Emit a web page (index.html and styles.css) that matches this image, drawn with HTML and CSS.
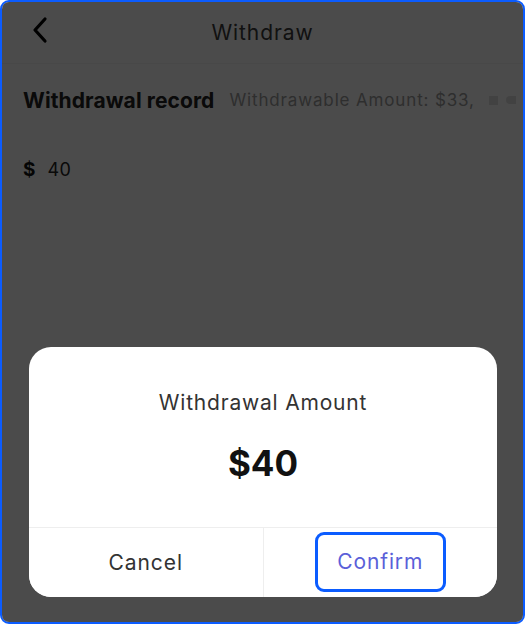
FILE: index.html
```html
<!DOCTYPE html>
<html>
<head>
<meta charset="utf-8">
<link rel="stylesheet" href="styles.css">
</head>
<body>
<div class="frame">
  <header class="nav">
    <svg class="back" width="18" height="28" viewBox="0 0 18 28"><path d="M14 3 L4 14 L14 25" fill="none" stroke="#000" stroke-width="3.2" stroke-linecap="round" stroke-linejoin="round"/></svg>
    <h1 class="nav-title">Withdraw</h1>
  </header>
  <div class="record-row">
    <span class="record-title">Withdrawal record</span>
    <div class="marquee">
      <span class="avail">Withdrawable Amount: $33,</span>
      <span class="fade-icon"></span>
      <span class="fade-icon2"></span>
    </div>
  </div>
  <div class="amount-row">
    <span class="cur">$</span>
    <span class="amt">40</span>
  </div>

  <div class="overlay"></div>
  <div class="dialog">
    <div class="dialog-body">
      <p class="dialog-title">Withdrawal Amount</p>
      <p class="dialog-value">$40</p>
    </div>
    <div class="dialog-actions">
      <button class="btn btn-cancel">Cancel</button>
      <button class="btn btn-confirm"><span class="focus">Confirm</span></button>
    </div>
  </div>
</div>
</body>
</html>
```
FILE: styles.css
```css
* { box-sizing: border-box; }
html, body { margin: 0; padding: 0; background: #fff; }
body {
  width: 525px;
  height: 624px;
  font-family: "Inter", "Open Sans", sans-serif;
}
.frame {
  position: relative;
  width: 525px;
  height: 624px;
  border: 2px solid #0b5cff;
  border-radius: 9px;
  background: #fff;
  overflow: hidden;
}
.nav {
  height: 62px;
  border-bottom: 1px solid #f3f3f3;
  display: flex;
  align-items: center;
  justify-content: center;
  position: relative;
}
.back {
  position: absolute;
  left: 29px;
  top: 14px;
}
.nav-title {
  margin: 0;
  font-size: 21px;
  font-weight: 400;
  color: #3a3a3a;
  letter-spacing: 0.9px;
}
.record-row {
  display: flex;
  align-items: center;
  padding: 11px 0 0 21px;
  height: 61px;
  white-space: nowrap;
}
.record-title {
  font-size: 21px;
  font-weight: 700;
  color: #222;
  letter-spacing: 0.1px;
}
.marquee {
  margin-left: 15px;
  display: flex;
  align-items: center;
  overflow: hidden;
  flex: 1;
}
.avail {
  font-size: 17px;
  color: #9c9c9c;
  letter-spacing: 0.85px;
}
.fade-icon {
  width: 9px; height: 9px;
  margin-left: 14px;
  background: #bbb;
  opacity: 0.45;
}
.fade-icon2 {
  width: 10px; height: 8px;
  margin-left: 8px;
  border-radius: 5px 0 0 5px;
  background: #bbb;
  opacity: 0.45;
}
.amount-row {
  display: flex;
  align-items: center;
  padding: 33px 0 0 21px;
  gap: 12px;
}
.cur { font-size: 19px; font-weight: 700; color: #111; }
.amt { font-size: 18px; color: #222; letter-spacing: 0.5px; }

.overlay {
  position: absolute;
  inset: 0;
  background: rgba(0,0,0,0.705);
}
.dialog {
  position: absolute;
  left: 27px;
  top: 345px;
  width: 468px;
  height: 250px;
  background: #fff;
  border-radius: 22px;
  overflow: hidden;
  display: flex;
  flex-direction: column;
}
.dialog-body {
  flex: 1;
  display: flex;
  flex-direction: column;
  align-items: center;
  padding-top: 43px;
  border-bottom: 1px solid #eeeeee;
}
.dialog-title {
  margin: 0;
  font-size: 21px;
  color: #333;
  letter-spacing: 0.8px;
}
.dialog-value {
  margin: 27px 0 0;
  font-size: 35px;
  font-weight: 700;
  color: #111;
}
.dialog-actions {
  height: 69px;
  display: flex;
}
.btn {
  flex: 1;
  border: 0;
  background: #fff;
  font-family: inherit;
  font-size: 21px;
  letter-spacing: 0.9px;
  padding: 0;
  display: flex;
  align-items: center;
  justify-content: center;
}
.btn-cancel { color: #333; border-right: 1px solid #eeeeee; }
.btn-confirm { color: #5a5fd9; }
.focus {
  display: flex;
  align-items: center;
  justify-content: center;
  width: 131px;
  height: 60px;
  border: 3px solid #0b5cff;
  border-radius: 9px;
  margin-bottom: 2px;
}
```
